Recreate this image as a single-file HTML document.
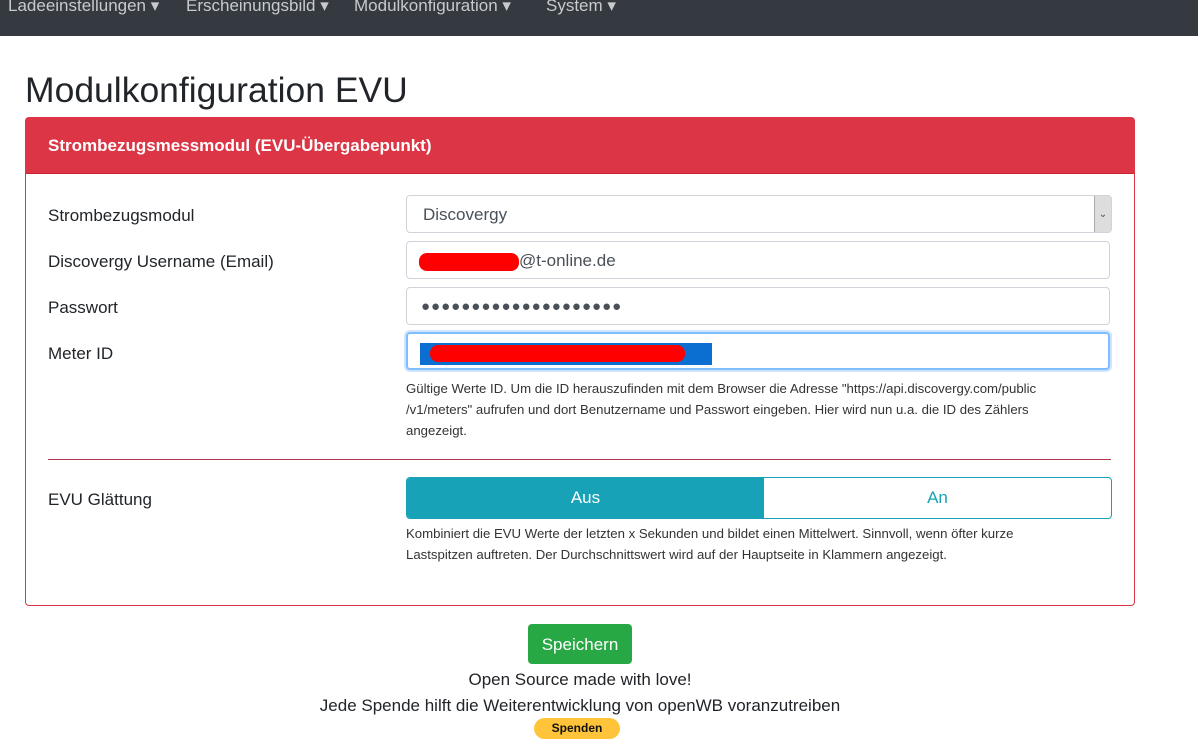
<!DOCTYPE html>
<html><head><meta charset="utf-8"><style>
body{margin:0;width:1198px;height:744px;overflow:hidden;background:#fff;font-family:"Liberation Sans",sans-serif;color:#212529;position:relative}
.nav{position:absolute;left:0;top:0;width:1198px;height:36px;background:#343a40}
.nav span{position:absolute;top:-4px;font-size:17px;color:#c8cacc}
.a{position:absolute}
h1{position:absolute;left:25px;top:70px;margin:0;font-weight:400;font-size:35.5px;color:#212529}
.card{position:absolute;left:25px;top:117px;width:1108px;height:487px;border:1px solid #dc3545;border-radius:4px}
.hdr{position:absolute;left:0;top:0;width:1108px;height:55px;background:#dc3545;color:#fff;font-weight:bold;font-size:17px;line-height:56px;text-indent:22px;border-bottom:1px solid #c82333}
.lbl{position:absolute;left:48px;font-size:17px}
.in{position:absolute;left:406px;width:704px;height:38px;border:1px solid #ced4da;border-radius:4px;box-sizing:border-box;font-size:17px;line-height:38px;padding-left:16px;color:#495057}
.help{position:absolute;left:406px;font-size:13.2px;color:#333;line-height:21px;width:710px}
</style></head><body>
<div class="nav"><span style="left:8px">Ladeeinstellungen ▾</span><span style="left:186px">Erscheinungsbild ▾</span><span style="left:354px">Modulkonfiguration ▾</span><span style="left:546px">System ▾</span></div>
<h1>Modulkonfiguration EVU</h1>
<div class="card"><div class="hdr">Strombezugsmessmodul (EVU-Übergabepunkt)</div></div>
<div class="lbl" style="top:206px">Strombezugsmodul</div>
<div class="in" style="top:195px;width:706px;">Discovergy<div style="position:absolute;right:0;top:0;width:16px;height:36px;background:#ddd;border-left:1px solid #aaa;font-size:10px;text-align:center">⌄</div></div>
<div class="lbl" style="top:252px">Discovergy Username (Email)</div>
<div class="in" style="top:241px"><span style="display:inline-block;width:100px;height:18px;background:#f00;border-radius:8px;vertical-align:middle;margin-left:-4px"></span>@t-online.de</div>
<div class="lbl" style="top:298px">Passwort</div>
<div class="in" style="top:287px;padding-left:14px;font-size:15px;letter-spacing:1px">●●●●●●●●●●●●●●●●●●●●</div>
<div class="lbl" style="top:344px">Meter ID</div>
<div class="in" style="top:332px;border:2px solid #80bdff;box-shadow:0 0 0 2px #cfe5ff;padding-left:12px"><span style="display:inline-block;width:292px;height:22px;background:#0a6fd0;vertical-align:middle;position:relative"><span style="position:absolute;left:10px;top:2px;width:255px;height:17px;background:#f00;border-radius:8px"></span></span></div>
<div class="help" style="top:378px">Gültige Werte ID. Um die ID herauszufinden mit dem Browser die Adresse "https://api.discovergy.com/public<br>/v1/meters" aufrufen und dort Benutzername und Passwort eingeben. Hier wird nun u.a. die ID des Zählers<br>angezeigt.</div>
<div class="a" style="left:48px;top:459px;width:1063px;height:1px;background:#b0364a"></div>
<div class="lbl" style="top:490px">EVU Glättung</div>
<div class="a" style="left:406px;top:477px;width:704px;height:40px;border:1px solid #17a2b8;border-radius:4px;overflow:hidden;font-size:17px;line-height:40px;text-align:center">
<div class="a" style="left:0;top:0;width:357px;height:40px;background:#17a2b8;color:#fff">Aus</div>
<div class="a" style="left:357px;top:0;width:347px;height:40px;color:#17a2b8">An</div></div>
<div class="help" style="top:523px">Kombiniert die EVU Werte der letzten x Sekunden und bildet einen Mittelwert. Sinnvoll, wenn öfter kurze<br>Lastspitzen auftreten. Der Durchschnittswert wird auf der Hauptseite in Klammern angezeigt.</div>
<div class="a" style="left:528px;top:624px;width:104px;height:40px;background:#28a745;border-radius:4px;color:#fff;font-size:17px;line-height:42px;text-align:center">Speichern</div>
<div class="a" style="left:0;top:670px;width:1160px;text-align:center;font-size:17px">Open Source made with love!</div>
<div class="a" style="left:0;top:696px;width:1160px;text-align:center;font-size:17px">Jede Spende hilft die Weiterentwicklung von openWB voranzutreiben</div>
<div class="a" style="left:534px;top:718px;width:86px;height:21px;background:#ffc439;border-radius:11px;font-size:12px;font-weight:bold;text-align:center;line-height:21px;color:#111">Spenden</div>
</body></html>
